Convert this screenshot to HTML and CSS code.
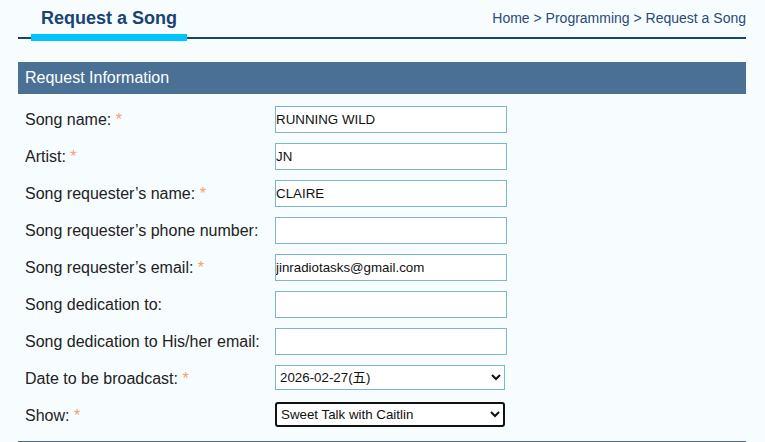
FILE: index.html
```html
<!DOCTYPE html>
<html lang="en">

<head>
    <meta charset="UTF-8">
    <meta name="viewport" content="width=device-width, initial-scale=1.0">
    <title>Request a Song</title>
    <link rel="stylesheet" href="styles.css">
</head>

<body>

    <div class="page">
        <div class="page-header">
            <h1 class="page-title">Request a Song</h1>
            <div class="breadcrumb">Home &gt; Programming &gt; Request a Song</div>
        </div>

        <div class="section-head">Request Information</div>

        <form class="request-form">
            <label>Song name: <span class="req">*</span></label>
            <input type="text" value="RUNNING WILD">

            <label>Artist: <span class="req">*</span></label>
            <input type="text" value="JN">

            <label>Song requester’s name: <span class="req">*</span></label>
            <input type="text" value="CLAIRE">

            <label>Song requester’s phone number:</label>
            <input type="text">

            <label>Song requester’s email: <span class="req">*</span></label>
            <input type="text" value="jinradiotasks@gmail.com">

            <label>Song dedication to:</label>
            <input type="text">

            <label>Song dedication to His/her email:</label>
            <input type="text">

            <label>Date to be broadcast: <span class="req">*</span></label>
            <select>
                <option>2026-02-27(五)</option>
                <option>2026-02-28(六)</option>
            </select>

            <label>Show: <span class="req">*</span></label>
            <select class="active">
                <option>Sweet Talk with Caitlin</option>
            </select>
        </form>
    </div>

</body>

</html>
```

FILE: styles.css
```css
body {
    margin: 0;
    background: #f7fcff;
    font-family: "Liberation Sans", Arial, "Noto Sans CJK SC", sans-serif;
    color: #222;
}

.page {
    width: 728px;
    margin: 0 18px;
}

.page-header {
    display: flex;
    justify-content: space-between;
    align-items: flex-start;
    padding-top: 7px;
    border-bottom: 2px solid #1a4373;
}

.page-title {
    margin: 0 0 -4px 13px;
    padding: 0 10px 5px;
    font-size: 18px;
    line-height: 22px;
    font-weight: bold;
    color: #1a4373;
    border-bottom: 7px solid #00c3ff;
}

.breadcrumb {
    padding-top: 2px;
    font-size: 14px;
    line-height: 18px;
    color: #2a4a78;
}

.section-head {
    margin-top: 23px;
    height: 32px;
    line-height: 32px;
    padding-left: 7px;
    background: #4a7096;
    color: #fff;
    font-size: 16px;
}

.request-form {
    display: grid;
    grid-template-columns: 250px 232px;
    grid-auto-rows: 27px;
    row-gap: 10px;
    align-items: center;
    padding: 12px 0 12px 7px;
    border-bottom: 1px solid #4a6a8a;
}

.request-form label {
    font-size: 16px;
    color: #222;
}

.req {
    color: #f5a06c;
}

.request-form input {
    box-sizing: border-box;
    width: 232px;
    height: 27px;
    margin: 0;
    padding: 1px 0;
    border: 1px solid #7ab6d6;
    background: #fff;
    font-family: "Liberation Sans", Arial, sans-serif;
    font-size: 13.33px;
    color: #111;
}

.request-form select {
    box-sizing: border-box;
    width: 230px;
    height: 25px;
    margin: 0 0 2px;
    border: 1px solid #7ab6d6;
    border-radius: 0;
    background: #fff;
    font-family: "Liberation Sans", Arial, "Noto Sans CJK SC", sans-serif;
    font-size: 13.33px;
    color: #111;
}

.request-form select.active {
    border: 2px solid #111;
    border-radius: 3px;
}
```
